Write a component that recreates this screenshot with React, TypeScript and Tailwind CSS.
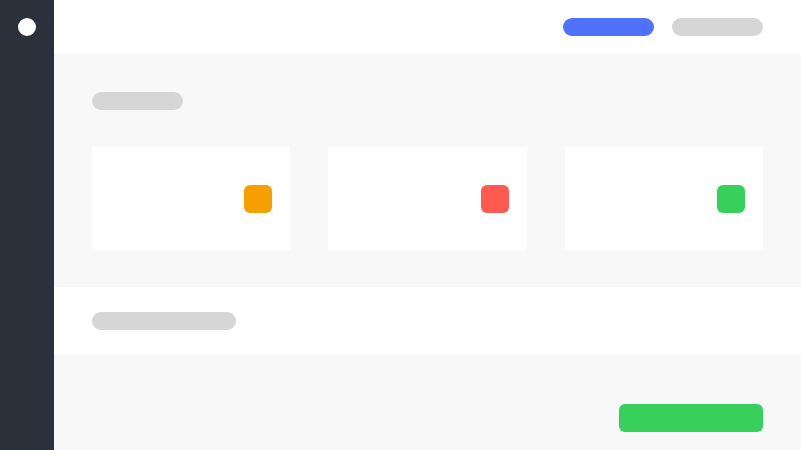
const cards = [
  { color: 'bg-[#f59f00]' },
  { color: 'bg-[#ff5a52]' },
  { color: 'bg-[#36d05a]' },
];

export default function App() {
  return (
    <div className="flex h-[450px] w-[801px] overflow-hidden bg-[#f8f8f8] font-['Liberation_Sans',sans-serif]">
      <aside className="flex w-[54px] shrink-0 justify-center bg-[#2a313b] pt-[18px]">
        <div className="h-[18px] w-[18px] rounded-full bg-white" />
      </aside>

      <div className="flex min-w-0 flex-1 flex-col">
        <header className="flex h-[54px] items-center justify-end gap-[18px] bg-white px-[38px]">
          <div className="h-[18px] w-[91px] rounded-full bg-[#4f72fb]" />
          <div className="h-[18px] w-[91px] rounded-full bg-[#d6d6d6]" />
        </header>

        <section className="px-[38px] pb-[37px] pt-[38px]">
          <div className="h-[18px] w-[91px] rounded-full bg-[#d6d6d6]" />
          <div className="mt-[37px] grid grid-cols-3 gap-[38px]">
            {cards.map((card, i) => (
              <div key={i} className="flex h-[103px] items-center justify-end bg-white pr-[18px]">
                <div className={`h-[28px] w-[28px] rounded-[6px] ${card.color}`} />
              </div>
            ))}
          </div>
        </section>

        <section className="bg-white px-[38px] pb-[24px] pt-[25px]">
          <div className="h-[18px] w-[144px] rounded-full bg-[#d6d6d6]" />
        </section>

        <section className="flex justify-end px-[38px] pt-[50px]">
          <div className="h-[28px] w-[144px] rounded-[6px] bg-[#36d05a]" />
        </section>
      </div>
    </div>
  );
}
